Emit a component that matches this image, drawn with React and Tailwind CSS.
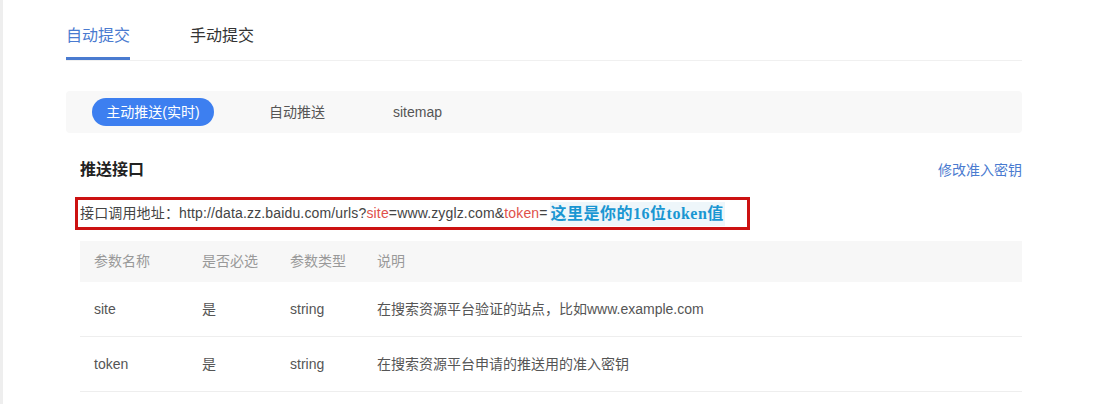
export default function App() {
  const rows = [
    { name: "site", required: "是", type: "string", desc: "在搜索资源平台验证的站点，比如www.example.com" },
    { name: "token", required: "是", type: "string", desc: "在搜索资源平台申请的推送用的准入密钥" },
  ];

  return (
    <div
      className="h-[404px] w-[1095px] overflow-hidden bg-white border-l-[3px] border-[#eeeeee]"
      style={{ fontFamily: '"Liberation Sans", "Noto Sans CJK SC", sans-serif' }}
    >
      <div className="ml-[63px] w-[956px]">
        {/* Top tabs */}
        <div className="flex h-[61px] items-end border-b border-[#f0f0f0]">
          <div className="flex h-full flex-col justify-between pt-[24px]">
            <span className="text-[16px] leading-[24px] text-[#4a7bd0]">自动提交</span>
            <div className="h-[3px] w-[64px] bg-[#4a7bd0]" />
          </div>
          <div className="ml-[60px] flex h-full flex-col pt-[24px]">
            <span className="text-[16px] leading-[24px] text-[#333]">手动提交</span>
          </div>
        </div>

        {/* Sub tabs */}
        <div className="mt-[30px] flex h-[42px] items-center rounded bg-[#f8f8f8] pl-[26px]">
          <span className="flex h-[28px] w-[122px] items-center justify-center rounded-full bg-[#3d7ff0] text-[14px] text-white">
            主动推送(实时)
          </span>
          <span className="ml-[55px] text-[14px] text-[#555]">自动推送</span>
          <span className="ml-[68px] text-[14px] text-[#555]">sitemap</span>
        </div>

        {/* Section */}
        <div className="mt-[24px] flex items-center justify-between pl-[14px]">
          <span className="text-[16px] font-bold leading-[26px] text-[#222]">推送接口</span>
          <span className="text-[14px] text-[#4a7bd0]">修改准入密钥</span>
        </div>

        <div className="ml-[9px] mt-[14px] flex h-[33px] w-[675px] items-center border-[3px] border-[#cc1111] pl-[2px] text-[14px] tracking-[0.15px] text-[#444]">
          <span>接口调用地址：http://data.zz.baidu.com/urls?</span>
          <span className="text-[#e0504a]">site</span>
          <span>=www.zyglz.com&amp;</span>
          <span className="text-[#e0504a]">token</span>
          <span>=</span>
          <span
            className="ml-[2px] bg-[#eef6fa] px-[1px] text-[16px] font-bold tracking-[0.5px] text-[#1a96d2]"
            style={{ fontFamily: '"Liberation Serif", "Noto Sans CJK SC", serif' }}
          >
            这里是你的16位token值
          </span>
        </div>

        {/* Table */}
        <div className="ml-[14px] mt-[11px] w-[942px] text-[14px]">
          <div className="flex h-[41px] items-center bg-[#f7f7f7] text-[#999]">
            <span className="w-[122px] pl-[14px]">参数名称</span>
            <span className="w-[88px]">是否必选</span>
            <span className="w-[87px]">参数类型</span>
            <span>说明</span>
          </div>
          {rows.map((r) => (
            <div key={r.name} className="flex h-[55px] items-center border-b border-[#eeeeee] text-[#555]">
              <span className="w-[122px] pl-[14px]">{r.name}</span>
              <span className="w-[88px]">{r.required}</span>
              <span className="w-[87px]">{r.type}</span>
              <span>{r.desc}</span>
            </div>
          ))}
        </div>
      </div>
    </div>
  );
}
